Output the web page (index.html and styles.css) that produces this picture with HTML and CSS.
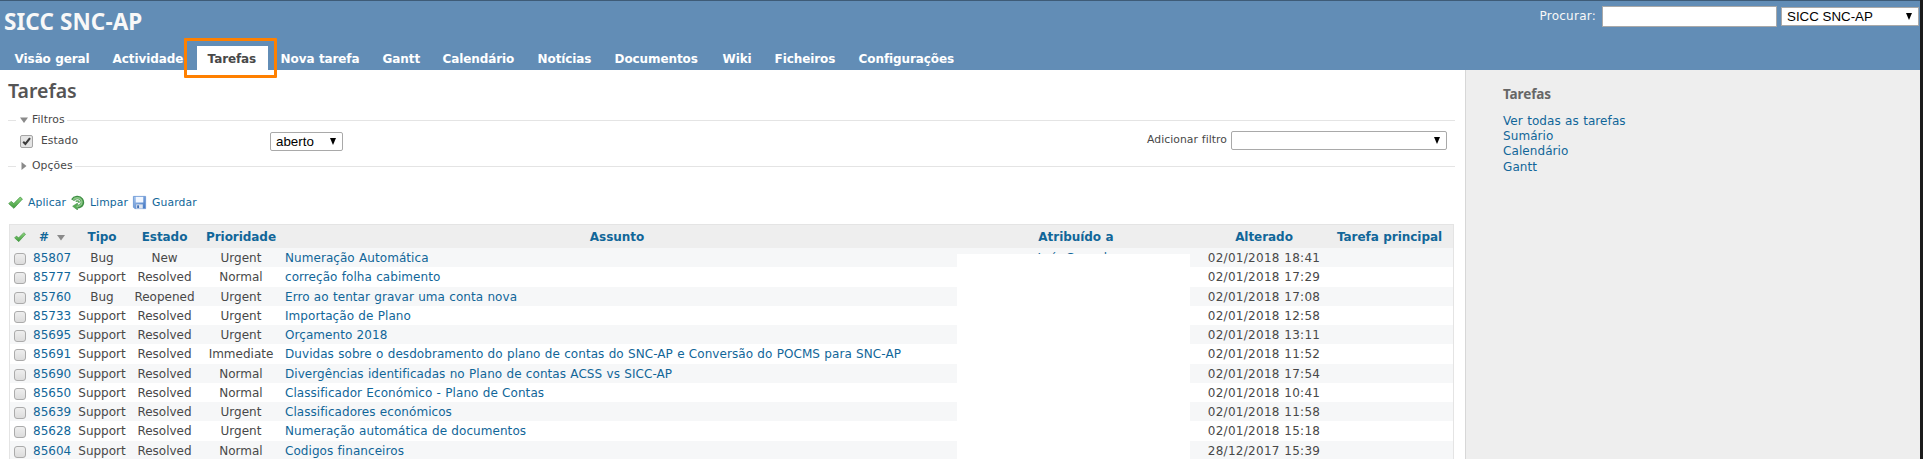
FILE: index.html
```
<!DOCTYPE html>
<html lang="pt">
<head>
<meta charset="utf-8">
<title>Tarefas - SICC SNC-AP</title>
<link rel="stylesheet" href="styles.css">
</head>
<body>
<svg class="defs" width="0" height="0">
  <defs>
    <linearGradient id="g" x1="0" y1="0" x2="0" y2="1"><stop offset="0" stop-color="#8fd67f"/><stop offset="1" stop-color="#3f9a3c"/></linearGradient>
    <linearGradient id="b" x1="0" y1="0" x2="1" y2="1"><stop offset="0" stop-color="#a9c8f0"/><stop offset="1" stop-color="#3f74c0"/></linearGradient>
    <symbol id="check" viewBox="0 0 16 16"><path d="M.8 9.200 3.200 6.800 6.200 9.100 13 2.200 15.400 4.300 6.300 14.200Z" fill="url(#g)" stroke="#3f9440" stroke-width=".8" stroke-linejoin="round"/></symbol>
  </defs>
</svg>
<div class="page">
  <header class="header">
    <div class="top">
      <h1 class="project">SICC SNC-AP</h1>
      <form class="search">
        <label class="search-label">Procurar:</label>
        <span class="search-box"></span>
        <span class="select select-project">SICC SNC-AP<i class="arrow"></i></span>
      </form>
    </div>
    <nav class="menu">
      <a class="t1">Visão geral</a><a class="t2">Actividade</a><a class="t3 selected">Tarefas</a><a class="t4">Nova tarefa</a><a class="t5">Gantt</a><a class="t6">Calendário</a><a class="t7">Notícias</a><a class="t8">Documentos</a><a class="t9">Wiki</a><a class="t10">Ficheiros</a><a class="t11">Configurações</a>
    </nav>
    <div class="highlight"></div>
  </header>
  <div class="main">
    <main class="content">
      <h2 class="title">Tarefas</h2>
      <div class="legend"><i class="tri down"></i><span>Filtros</span></div>
      <div class="filters">
        <svg class="cb-checked" viewBox="0 0 13 13"><rect x=".5" y=".5" width="12" height="12" rx="1.5" fill="#e4e4e4" stroke="#a5a5a5"/><path d="M3.2 6.8 5.4 9 10 3.2" fill="none" stroke="#3c3c3c" stroke-width="2.1"/></svg>
        <span class="filter-name">Estado</span>
        <span class="select select-state">aberto<i class="arrow"></i></span>
        <span class="add-label">Adicionar filtro</span>
        <span class="select select-add"><i class="arrow"></i></span>
      </div>
      <div class="legend"><i class="tri right"></i><span>Opções</span></div>
      <div class="buttons">
        <svg class="icon"><use href="#check"/></svg><a class="b1">Aplicar</a>
        <svg class="icon" viewBox="0 0 16 16"><path d="M2.800 5.400C4.600 2.400 10 1.600 12.200 4.800 14.600 8.600 12.400 12.400 8.200 12.400" fill="none" stroke="#3f8f45" stroke-width="3.800"/><path d="M9.200 8.400Q10.800 5.600 6 6.600" fill="none" stroke="#58a558" stroke-width="1.600"/><path d="M8 8.600v7.400L2.800 12Z" fill="#58ad55" stroke="#3f8f45" stroke-width=".6"/><path d="M3.400 5C5.200 2.800 10 2.200 12 5.200 14 8.600 12 12.200 7 12.300" fill="none" stroke="#8bc886" stroke-width="1.800"/></svg><a class="b2">Limpar</a>
        <svg class="icon" viewBox="0 0 16 16"><path d="M1.500 1.500h13v13h-11.500l-1.500-1.500Z" fill="url(#b)" stroke="#6f9ad6"/><rect x="4" y="2" width="8" height="6" fill="#f2f7ff"/><rect x="4.500" y="10" width="7" height="4.500" fill="#dfe6f0"/><rect x="5.500" y="11" width="2" height="3" fill="#4471b4"/></svg><a class="b3">Guardar</a>
      </div>
      <div class="issues" id="issues">
        <div class="row head"><span><svg class="icon-s"><use href="#check"/></svg></span><span class="sort"># <i class="tri down"></i></span><span>Tipo</span><span>Estado</span><span>Prioridade</span><span>Assunto</span><span>Atribuído a</span><span>Alterado</span><span>Tarefa principal</span></div>
      </div>
    </main>
    <aside class="sidebar">
      <h3>Tarefas</h3>
      <a>Ver todas as tarefas</a><a>Sumário</a><a>Calendário</a><a>Gantt</a>
    </aside>
  </div>
</div>
<script src="issues.js"></script>
</body>
</html>
```
FILE: styles.css
```
* { box-sizing: border-box; }
body { margin: 0; background: #1b1b1b; font: 12px/15px Verdana, "DejaVu Sans", sans-serif; color: #484848; word-spacing: .4px; overflow: hidden; }
.defs { position: absolute; }
.page { width: 1920px; height: 459px; overflow: hidden; background: #fff; display: flex; flex-direction: column; }
a { color: #169; }
.header { position: relative; height: 70px; flex: none; background: #628db6; border-top: 1px solid #3e5b77; color: #f8f8f8; display: flex; flex-direction: column; justify-content: space-between; }
.top { display: flex; justify-content: space-between; }
.project { margin: 6px 0 0 4px; font: bold 22.5px/30px "Trebuchet MS", "Noto Sans", sans-serif; word-spacing: 0; letter-spacing: .1px; }
.search { display: flex; align-items: flex-start; padding: 5px 1px 0 0; }
.search-label { margin: 3px 6px 0 0; letter-spacing: .25px; }
.search-box { width: 175px; height: 21px; background: #fff; border: 1px solid #a9a9a9; margin-right: 4px; }
.select { display: flex; align-items: center; justify-content: space-between; height: 19px; border: 1px solid #a9a9a9; border-radius: 2px; background: #fff; color: #000; font: 13.33px/17px Arial, "Liberation Sans", sans-serif; word-spacing: 0; letter-spacing: 0; padding: 0 6px 0 5px; }
.arrow { margin-left: auto; border: solid transparent; border-width: 7px 3.5px 0; border-top-color: #000; }
.select-project { width: 138px; margin-top: 1px; border-radius: 0; }
.menu { display: flex; height: 24px; padding-left: 4px; }
.menu a { color: #fff; font-weight: bold; line-height: 26px; padding-left: 10.6px; letter-spacing: -.1px; white-space: nowrap; flex: none; }
.menu .selected { background: #fff; color: #484848; margin-right: 2px; }
.t1 { width: 98px; } .t2 { width: 95px; } .t3 { width: 71px; } .t4 { width: 102px; } .t5 { width: 60px; } .t6 { width: 95px; } .t7 { width: 77px; } .t8 { width: 108px; } .t9 { width: 52px; } .t10 { width: 84px; }
.highlight { position: absolute; left: 184px; top: 37px; width: 93px; height: 40px; border: 3px solid #ff8000; border-radius: 1px; z-index: 2; }
.main { display: flex; flex: 1; min-height: 0; }
.content { width: 1465px; padding: 7px 11px 0 8px; overflow: hidden; }
.title { margin: 0 0 9px; font: 600 19.5px/27px "Trebuchet MS", "Noto Sans", sans-serif; letter-spacing: 0; color: #555; }
.legend { display: flex; align-items: center; height: 14px; font-size: 10.8px; line-height: 14px; width: 1447px; }
.legend::before { content: ""; width: 8px; height: 1px; background: #e4e4e4; margin-right: 4px; }
.legend::after { content: ""; flex: 1; height: 1px; background: #e4e4e4; margin-left: 2px; }
.legend span { margin-left: 4px; letter-spacing: .1px; line-height: 16px; }
.tri { display: inline-block; width: 8px; height: 8px; background: #8a8a8a; }
.tri.down { clip-path: polygon(0 1.5px, 8px 1.5px, 4px 7px); }
.tri.right { clip-path: polygon(1.500px 0, 6.500px 4px, 1.500px 8px); }
.filters { display: flex; height: 32px; font-size: 10.8px; padding-left: 12px; }
.cb-checked { width: 13px; height: 13px; margin: 8px 8px 0 0; }
.filter-name { width: 229px; margin-top: 6px; letter-spacing: .05px; }
.select-state { width: 73px; margin-top: 5px; }
.add-label { margin: 5px 4px 0 auto; letter-spacing: .05px; }
.select-add { width: 216px; margin: 4px 7px 0 0; }
.buttons { display: flex; align-items: center; height: 20px; margin: 19px 0 12px; font-size: 10.8px; letter-spacing: .1px; }
.icon { width: 15px; height: 15px; margin-right: 5px; margin-top: 1px; }
.buttons a { flex: none; }
.b1 { width: 42px; } .b2 { width: 42px; }
.issues { margin-left: 1px; width: 1445px; border: 1px solid #e4e4e4; }
.row { display: grid; grid-template-columns: 20px 43px 58px 67px 86px 666px 252px 124px 127px; height: 19.27px; line-height: 21px; text-align: center; white-space: nowrap; }
.row:nth-child(even) { background: #f6f7f8; }
.head { height: 23px; line-height: 25px; background: #eee; font-weight: bold; color: #169; letter-spacing: -.05px; }
.icon-s { width: 12px; height: 12px; vertical-align: -2px; }
.sort { display: flex; align-items: center; gap: 8px; padding-left: 9px; }
.row .subject { text-align: left; padding-left: 1px; letter-spacing: .06px; }
.head .subject { text-align: center; }
.row .num { text-align: left; padding-left: 3px; }
.row .date { letter-spacing: .28px; }
.cb { display: inline-block; width: 12px; height: 12px; margin: 5px 0 0; border: 1px solid #ababab; border-radius: 3px; background: linear-gradient(#eee, #dcdcdc); vertical-align: top; }
.person { position: relative; }
.mask { position: absolute; left: 7px; top: 6px; width: 233px; height: 220px; background: #fff; z-index: 1; }
.sidebar { flex: 1; background: #eee; border-left: 1px solid #d7d7d7; padding: 16px 0 0 37px; display: flex; flex-direction: column; }
.sidebar h3 { margin: 0 0 11px; font: bold 13.5px/17px "Trebuchet MS", "Noto Sans", sans-serif; letter-spacing: -.1px; color: #666; }
.sidebar a { line-height: 15.2px; letter-spacing: .08px; }
```
FILE: issues.js
```
const issues = [
  ["85807", "Bug", "New", "Urgent", "Numeração Automática", "02/01/2018 18:41", "Luís Gonçalo"],
  ["85777", "Support", "Resolved", "Normal", "correção folha cabimento", "02/01/2018 17:29"],
  ["85760", "Bug", "Reopened", "Urgent", "Erro ao tentar gravar uma conta nova", "02/01/2018 17:08"],
  ["85733", "Support", "Resolved", "Urgent", "Importação de Plano", "02/01/2018 12:58"],
  ["85695", "Support", "Resolved", "Urgent", "Orçamento 2018", "02/01/2018 13:11"],
  ["85691", "Support", "Resolved", "Immediate", "Duvidas sobre o desdobramento do plano de contas do SNC-AP e Conversão do POCMS para SNC-AP", "02/01/2018 11:52"],
  ["85690", "Support", "Resolved", "Normal", "Divergências identificadas no Plano de contas ACSS vs SICC-AP", "02/01/2018 17:54"],
  ["85650", "Support", "Resolved", "Normal", "Classificador Económico - Plano de Contas", "02/01/2018 10:41"],
  ["85639", "Support", "Resolved", "Urgent", "Classificadores económicos", "02/01/2018 11:58"],
  ["85628", "Support", "Resolved", "Urgent", "Numeração automática de documentos", "02/01/2018 15:18"],
  ["85604", "Support", "Resolved", "Normal", "Codigos financeiros", "28/12/2017 15:39"]
];
document.getElementById("issues").insertAdjacentHTML("beforeend", issues.map(([id, type, state, prio, subject, date, person]) =>
  `<div class="row"><span><i class="cb"></i></span><span class="num"><a>${id}</a></span><span>${type}</span><span>${state}</span><span>${prio}</span><span class="subject"><a>${subject}</a></span><span class="person">${person ? `<a>${person}</a><i class="mask"></i>` : ""}</span><span class="date">${date}</span><span></span></div>`
).join(""));
```
